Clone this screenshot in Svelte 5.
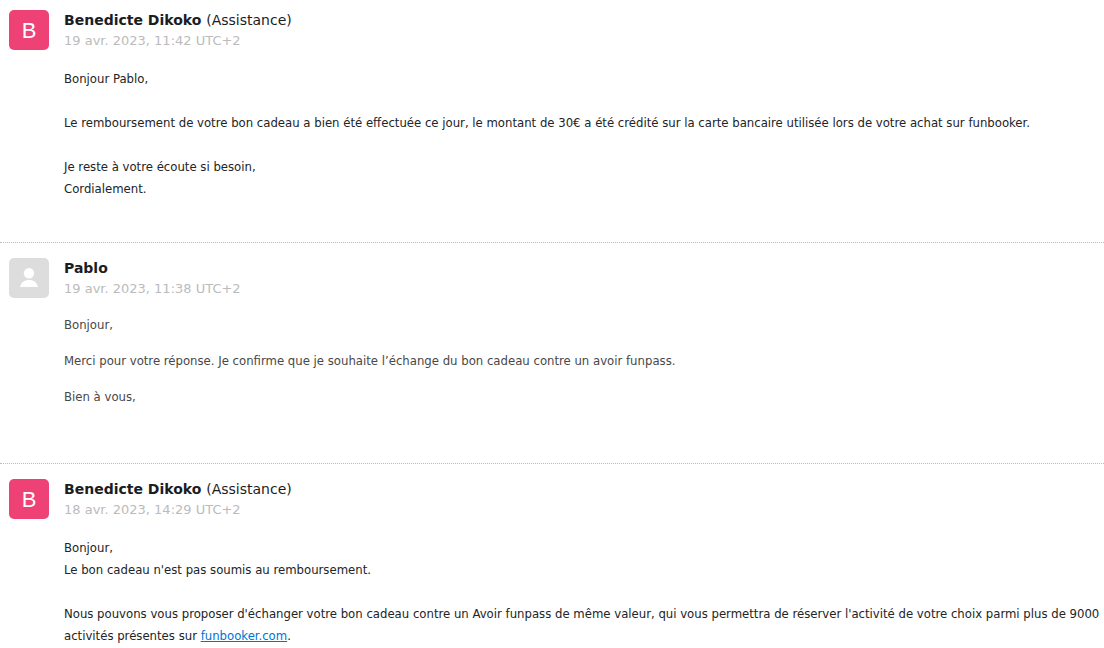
<script>
  const messages = [
    {
      author: 'Benedicte Dikoko', role: '(Assistance)', initial: 'B',
      date: '19 avr. 2023, 11:42 UTC+2', kind: 'agent',
      blocks: [
        [['Bonjour Pablo,']],
        [['Le remboursement de votre bon cadeau a bien été effectuée ce jour, le montant de 30€ a été crédité sur la carte bancaire utilisée lors de votre achat sur funbooker.']],
        [['Je reste à votre écoute si besoin,'], ['Cordialement.']],
      ],
    },
    {
      author: 'Pablo', role: '', initial: '',
      date: '19 avr. 2023, 11:38 UTC+2', kind: 'customer',
      blocks: [
        [['Bonjour,']],
        [['Merci pour votre réponse. Je confirme que je souhaite l’échange du bon cadeau contre un avoir funpass.']],
        [['Bien à vous,']],
      ],
    },
    {
      author: 'Benedicte Dikoko', role: '(Assistance)', initial: 'B',
      date: '18 avr. 2023, 14:29 UTC+2', kind: 'agent',
      blocks: [
        [['Bonjour,'], ["Le bon cadeau n'est pas soumis au remboursement."]],
        [["Nous pouvons vous proposer d'échanger votre bon cadeau contre un Avoir funpass de même valeur, qui vous permettra de réserver l'activité de votre choix parmi plus de 9000 activités présentes sur ", 'funbooker.com', '.']],
      ],
    },
  ];
</script>

<main>
  {#each messages as m}
    <article class={m.kind}>
      <div class="avatar" aria-hidden="true">
        {#if m.initial}
          {m.initial}
        {:else}
          <svg viewBox="0 0 40 40" width="40" height="40">
            <circle cx="20" cy="15.3" r="5.2" fill="#fff" />
            <path d="M11 29C12 24.500 15.500 22 20 22s8 2.500 9 7z" fill="#fff" />
          </svg>
        {/if}
      </div>
      <div class="content">
        <header>
          <h2>{m.author}{#if m.role}&nbsp;<span>{m.role}</span>{/if}</h2>
          <time>{m.date}</time>
        </header>
        <div class="body">
          {#each m.blocks as block}
            <p>
              {#each block as line, i}{#if i}<br />{/if}{line[0]}{#if line[1]}<a href="https://funbooker.com">{line[1]}</a>{line[2]}{/if}{/each}
            </p>
          {/each}
        </div>
      </div>
    </article>
  {/each}
</main>

<style>
  :global(body) {
    background: #fff;
  }
  main {
    font-family: 'DejaVu Sans Condensed', 'DejaVu Sans', sans-serif;
    color: #222426;
  }
  article {
    display: flex;
    gap: 15px;
    padding: 15px 0 42px 9px;
    border-bottom: 1px dotted #bbb;
  }
  article:first-child {
    padding-top: 10px;
  }
  article:last-child {
    padding-bottom: 0;
    border-bottom: 0;
  }
  .avatar {
    flex: none;
    width: 40px;
    height: 40px;
    border-radius: 5px;
    background: #ee4276;
    color: #fff;
    font: 22px/41px 'Liberation Sans', sans-serif;
    text-align: center;
  }
  .customer .avatar {
    background: #ddd;
  }
  svg {
    display: block;
  }
  .content {
    flex: 1;
    min-width: 0;
  }
  header {
    font-family: 'DejaVu Sans', sans-serif;
  }
  h2 {
    margin: 0;
    font-size: 14px;
    line-height: 20px;
    font-weight: 700;
    color: #1b1d1f;
  }
  h2 span {
    font-weight: 400;
  }
  time {
    display: block;
    font-size: 13px;
    line-height: 22px;
    color: #bbb;
  }
  .body {
    padding-top: 16px;
    font-size: 13px;
    line-height: 22px;
  }
  p {
    margin: 0 0 22px;
  }
  p:last-child {
    margin-bottom: 0;
  }
  .customer {
    padding-bottom: 55px;
  }
  .customer .body {
    color: #484848;
    padding-top: 14px;
  }
  .customer p:not(:last-child) {
    margin-bottom: 14px;
  }
  a {
    color: #0072d6;
  }
</style>
